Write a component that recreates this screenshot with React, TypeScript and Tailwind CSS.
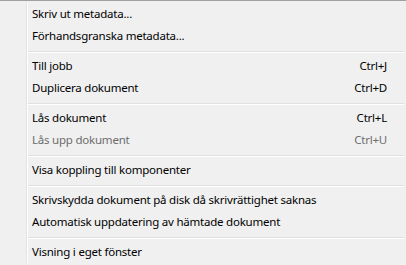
type Item =
  | { kind: 'item'; label: string; shortcut?: string; disabled?: boolean }
  | { kind: 'sep' };

const items: Item[] = [
  { kind: 'item', label: 'Skriv ut metadata...' },
  { kind: 'item', label: 'Förhandsgranska metadata...' },
  { kind: 'sep' },
  { kind: 'item', label: 'Till jobb', shortcut: 'Ctrl+J' },
  { kind: 'item', label: 'Duplicera dokument', shortcut: 'Ctrl+D' },
  { kind: 'sep' },
  { kind: 'item', label: 'Lås dokument', shortcut: 'Ctrl+L' },
  { kind: 'item', label: 'Lås upp dokument', shortcut: 'Ctrl+U', disabled: true },
  { kind: 'sep' },
  { kind: 'item', label: 'Visa koppling till komponenter' },
  { kind: 'sep' },
  { kind: 'item', label: 'Skrivskydda dokument på disk då skrivrättighet saknas' },
  { kind: 'item', label: 'Automatisk uppdatering av hämtade dokument' },
  { kind: 'sep' },
  { kind: 'item', label: 'Visning i eget fönster' },
];

export default function App() {
  return (
    <div className="h-[265px] w-[406px] overflow-hidden bg-[#f0f0f0] font-['Noto_Sans',sans-serif] text-[11.5px] tracking-[-0.22px] text-black">
      <div className="relative h-full border-t border-[#a0a0a0] pt-[2px]">
        {/* icon gutter */}
        <div className="absolute left-[26px] top-[1px] h-[261px] w-[2px] border-l border-[#e2e3e3] bg-white" />
        <ul className="flex flex-col">
          {items.map((item, i) =>
            item.kind === 'sep' ? (
              <li key={i} className="h-[8px] pl-[28px] pr-[2px] pt-[4px]">
                <div className="h-[2px] border-t border-[#e0e0e0] bg-white" />
              </li>
            ) : (
              <li
                key={i}
                className={`flex h-[22px] items-center justify-between pl-[32px] pr-[19px] leading-[22px] ${
                  item.disabled ? 'text-[#6d6d6d]' : 'text-black'
                }`}
              >
                <span>{item.label}</span>
                {item.shortcut && <span>{item.shortcut}</span>}
              </li>
            ),
          )}
        </ul>
      </div>
    </div>
  );
}
